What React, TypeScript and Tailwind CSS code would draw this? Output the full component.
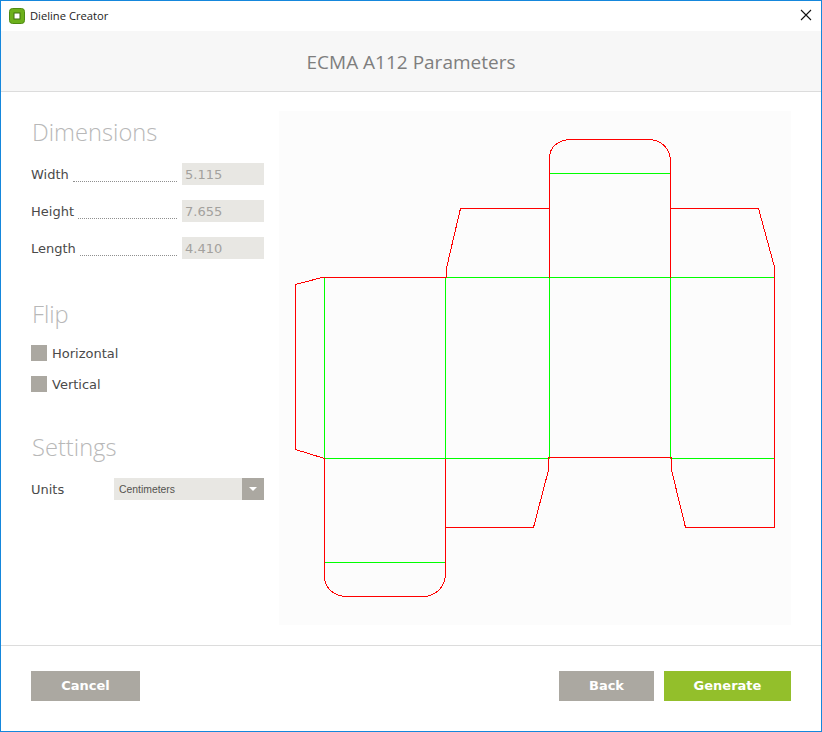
import React from "react";

const RED = "#ff0000";
const GREEN = "#00ff00";

function Dieline() {
  return (
    <svg viewBox="279 111 512 514" className="block w-[512px] h-[514px]" fill="none" shapeRendering="crispEdges" strokeWidth={1}>
      <g stroke={GREEN}>
        <path d="M549.5 173.5H670.5" />
        <path d="M446 277.5H775" />
        <path d="M324.5 277.5V458.5M445.5 277.5V458.5M549.5 277.5V458.5M670.5 277.5V458.5" />
        <path d="M324.5 458.5H549.5M670.5 458.5H775" />
        <path d="M324.5 562.5H445.5" />
      </g>
      <g stroke={RED}>
        <path d="M446.5 277.5V268L460.5 208.5H549.5M549.5 277.5V158C549.5 147 558 139.5 572 139.5H648C662 139.5 670.5 149 670.5 162V277.5" />
        <path d="M670.5 208.5H758.5L774.5 267V527.5H685.5L671.5 470V457.5H548.5V470L533.5 527.5H445.5" />
        <path d="M445.5 458.5V573C445.5 587 436 596.5 422.5 596.5H347.5C334 596.5 324.5 588 324.5 576.5V458.5L295.5 449.5V284.5L322 277.5H446.5" />
      </g>
    </svg>
  );
}

function Field({ label, value }: { label: string; value: string }) {
  return (
    <div className="flex items-center h-[22px]">
      <span className="pt-[2px] text-[13px] leading-[22px] text-[#4a4a4a]">{label}</span>
      <span className="flex-1 self-end mb-[3px] ml-[4px] mr-[5px] border-b border-dotted border-[#8f8f8f]" />
      <span className="w-[82px] h-[22px] bg-[#e8e7e3] pl-[3px] pt-[1px] text-[13px] leading-[22px] text-[#a3a19d]">{value}</span>
    </div>
  );
}

function Heading({ children }: { children: React.ReactNode }) {
  return (
    <h2 className="ml-[1px] text-[23.7px] leading-[32px] font-light text-[#b8b8b8] [font-family:'Open_Sans','Noto_Sans',sans-serif]">{children}</h2>
  );
}

function Check({ label }: { label: string }) {
  return (
    <div className="flex items-center gap-[5px] h-[16px]">
      <span className="w-[16px] h-[16px] bg-[#aba8a1]" />
      <span className="pt-[2px] text-[13px] leading-[16px] text-[#4a4a4a]">{label}</span>
    </div>
  );
}

export default function App() {
  return (
    <div className="w-[822px] h-[732px] flex flex-col bg-white border border-[#1587dc] [font-family:'DejaVu_Sans',sans-serif]">
      <div className="h-[30px] flex items-center justify-between pl-[8px] pr-[9px] shrink-0">
        <div className="flex items-center gap-[5px]">
          <svg width="16" height="16" viewBox="0 0 16 16">
            <rect x="0.5" y="0.5" width="15" height="15" rx="3" fill="#6cb01c" stroke="#4e8a12" />
            <rect x="5" y="5" width="6" height="6" fill="#ffffff" stroke="#3f6f0e" strokeWidth="1" />
          </svg>
          <span className="text-[11.2px] text-[#222222] [font-family:'Open_Sans',sans-serif]">Dieline Creator</span>
        </div>
        <svg width="12" height="12" viewBox="0 0 12 12" stroke="#111111" strokeWidth="1.1" className="mb-[2px]">
          <path d="M1 1L11 11M11 1L1 11" />
        </svg>
      </div>
      <div className="h-[61px] shrink-0 bg-[#f7f7f7] border-b border-[#dcdcdc] flex items-center justify-center">
        <h1 className="pt-[2px] text-[19px] text-[#7e7e7e] [font-family:'Open_Sans',sans-serif]">ECMA A112 Parameters</h1>
      </div>
      <div className="flex-1 flex pl-[30px] pr-[30px] pt-[19px]">
        <div className="w-[233px] shrink-0">
          <div className="mt-[5px]"><Heading>Dimensions</Heading></div>
          <div className="mt-[15px] flex flex-col gap-[15px]">
            <Field label="Width" value="5.115" />
            <Field label="Height" value="7.655" />
            <Field label="Length" value="4.410" />
          </div>
          <div className="mt-[39px]"><Heading>Flip</Heading></div>
          <div className="mt-[15px] flex flex-col gap-[15px]">
            <Check label="Horizontal" />
            <Check label="Vertical" />
          </div>
          <div className="mt-[39px]"><Heading>Settings</Heading></div>
          <div className="mt-[15px] flex items-center h-[22px]">
            <span className="w-[83px] pt-[2px] text-[13px] text-[#4a4a4a]">Units</span>
            <div className="flex-1 h-[22px] flex bg-[#e8e7e3]">
              <span className="flex-1 pl-[5px] pt-[1px] text-[10.4px] leading-[22px] text-[#55534f] [font-family:'Liberation_Sans',sans-serif]">Centimeters</span>
              <span className="w-[22px] h-[22px] bg-[#aba8a1] flex items-center justify-center">
                <svg width="8" height="4" viewBox="0 0 8 4"><path d="M0 0H8L4 4Z" fill="#ffffff" /></svg>
              </span>
            </div>
          </div>
        </div>
        <div className="ml-[15px] w-[512px] h-[514px] bg-[#fcfcfc]">
          <Dieline />
        </div>
      </div>
      <div className="h-[86px] shrink-0 border-t border-[#dcdcdc] flex items-start justify-between pl-[30px] pr-[30px] pt-[25px]">
        <button className="w-[109px] h-[30px] bg-[#aba8a1] text-white font-bold text-[13px]">Cancel</button>
        <div className="flex gap-[10px]">
          <button className="w-[95px] h-[30px] bg-[#aba8a1] text-white font-bold text-[13px]">Back</button>
          <button className="w-[127px] h-[30px] bg-[#93bf2b] text-white font-bold text-[13px]">Generate</button>
        </div>
      </div>
    </div>
  );
}
